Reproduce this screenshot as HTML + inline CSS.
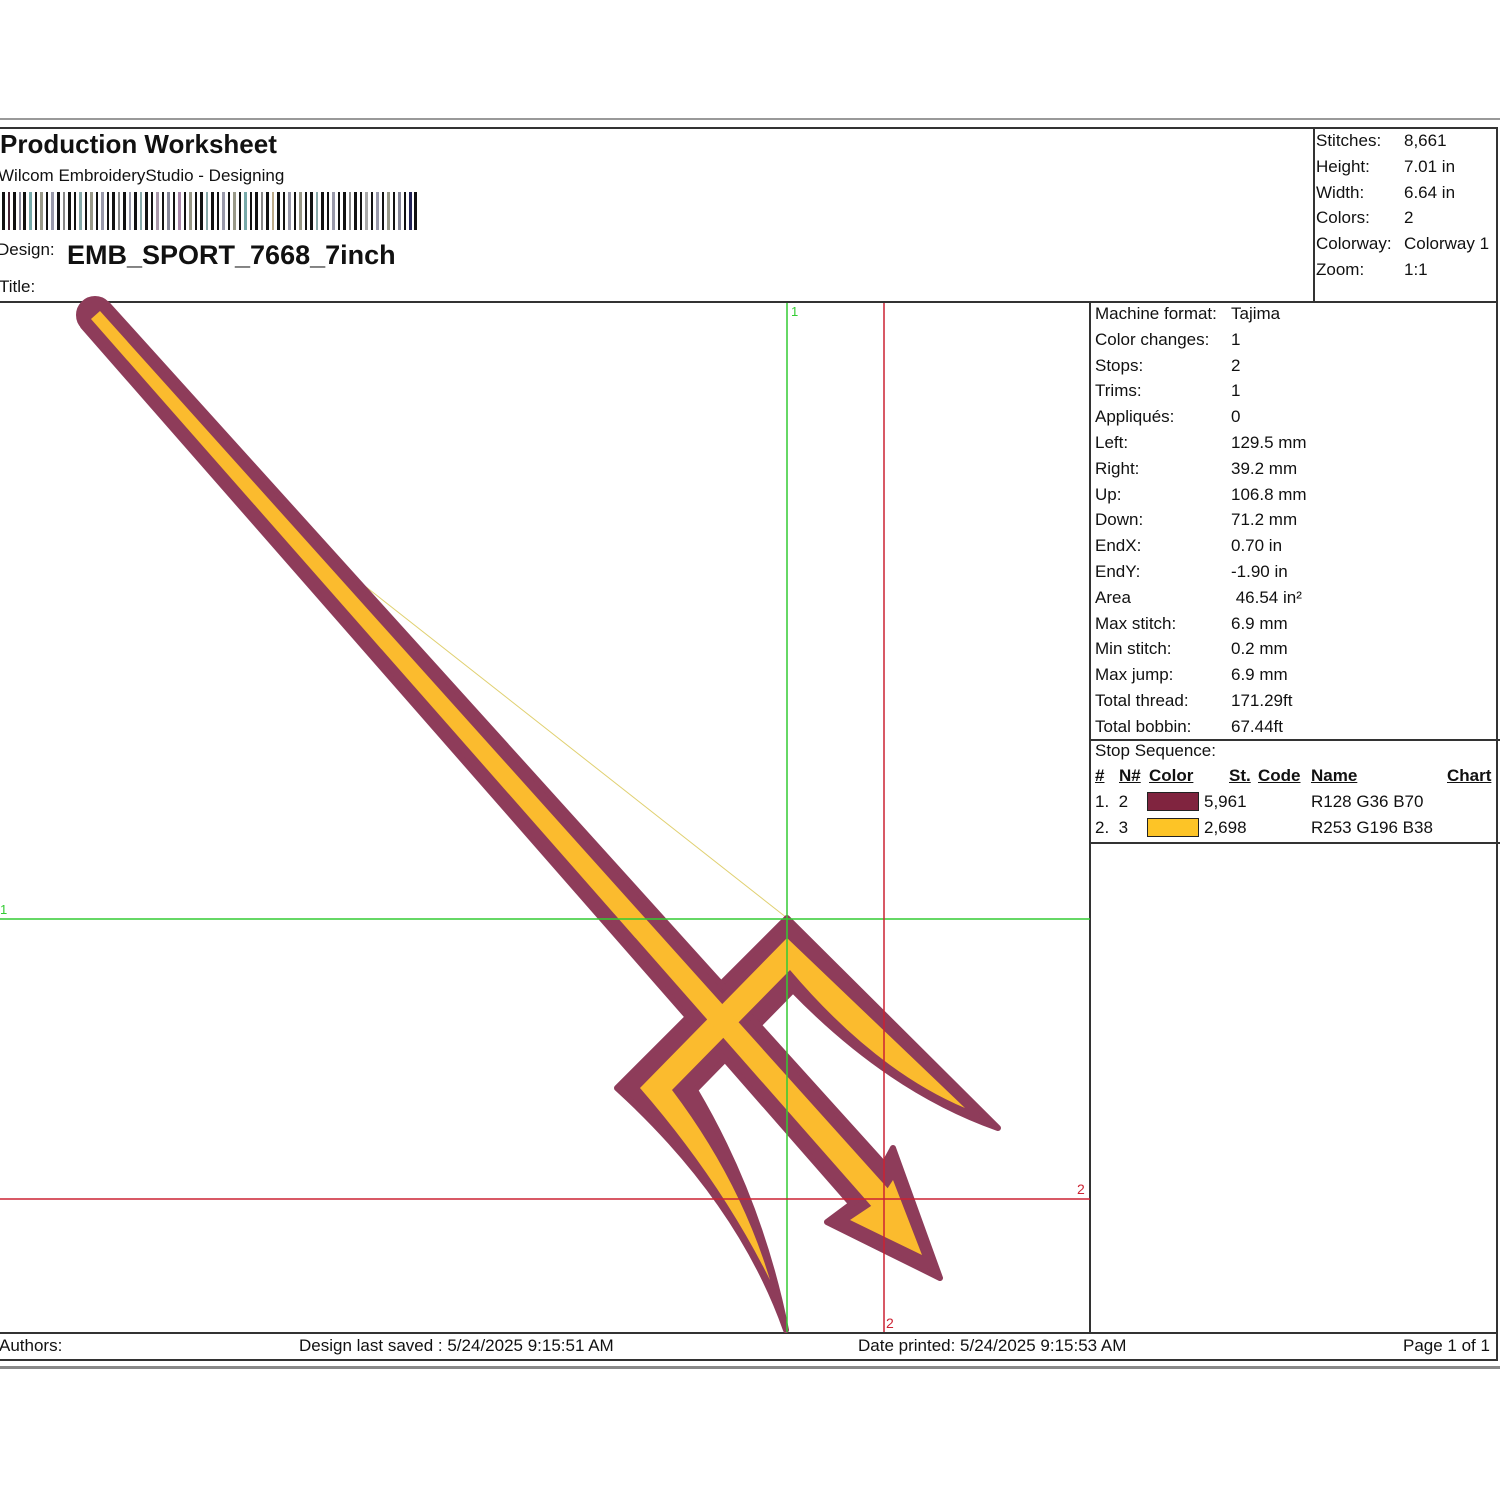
<!DOCTYPE html>
<html><head><meta charset="utf-8"><style>
html,body{margin:0;padding:0;background:#fff;}
body{width:1500px;height:1495px;position:relative;overflow:hidden;font-family:"Liberation Sans",sans-serif;color:#111;}
.a{position:absolute;white-space:nowrap;}
.t{font-size:17px;line-height:20px;}
.l{position:absolute;background:#333;}
u{text-decoration:underline;}
</style></head><body>
<div class="l" style="left:0;top:118px;width:1500px;height:2px;background:#999"></div>
<div class="l" style="left:0;top:127px;width:1498px;height:2px;"></div>
<div class="l" style="left:1496px;top:127px;width:2px;height:1234px;"></div>
<div class="l" style="left:0;top:301px;width:1498px;height:2px;"></div>
<div class="l" style="left:1313px;top:127px;width:2px;height:175px;"></div>
<div class="l" style="left:1089px;top:302px;width:2px;height:1031px;"></div>
<div class="l" style="left:1090px;top:739px;width:1407px;height:2px;"></div>
<div class="l" style="left:1090px;top:842px;width:1407px;height:2px;"></div>
<div class="l" style="left:0;top:1332px;width:1498px;height:2px;"></div>
<div class="l" style="left:0;top:1359px;width:1498px;height:2px;"></div>
<div class="l" style="left:0;top:1366px;width:1500px;height:3px;background:#888"></div>

<div class="a" style="left:0;top:129px;font-size:26px;font-weight:bold;">Production Worksheet</div>
<div class="a t" style="left:-2px;top:166px;">Wilcom EmbroideryStudio - Designing</div>
<svg class="a" style="left:2px;top:192px" width="416" height="38">
<g fill="#111">
<rect x="0" y="0" width="3" height="38"/><rect x="6" y="0" width="2" height="38" fill="#423"/><rect x="11" y="0" width="3" height="38"/><rect x="17" y="0" width="2" height="38" fill="#889"/><rect x="21" y="0" width="3" height="38"/><rect x="27" y="0" width="3" height="38" fill="#7aa"/><rect x="33" y="0" width="2" height="38"/><rect x="38" y="0" width="3" height="38" fill="#998"/><rect x="44" y="0" width="2" height="38"/><rect x="49" y="0" width="3" height="38" fill="#99a"/><rect x="55" y="0" width="3" height="38"/><rect x="61" y="0" width="2" height="38" fill="#888"/><rect x="66" y="0" width="3" height="38"/><rect x="72" y="0" width="2" height="38"/><rect x="77" y="0" width="3" height="38" fill="#8aa"/><rect x="83" y="0" width="2" height="38"/><rect x="88" y="0" width="3" height="38" fill="#998"/><rect x="94" y="0" width="2" height="38"/><rect x="99" y="0" width="3" height="38" fill="#99a"/><rect x="105" y="0" width="2" height="38"/><rect x="110" y="0" width="3" height="38"/><rect x="116" y="0" width="2" height="38" fill="#888"/><rect x="121" y="0" width="3" height="38"/><rect x="127" y="0" width="2" height="38" fill="#99a"/><rect x="132" y="0" width="3" height="38"/><rect x="138" y="0" width="2" height="38" fill="#8aa"/><rect x="143" y="0" width="3" height="38"/><rect x="149" y="0" width="2" height="38"/><rect x="154" y="0" width="3" height="38" fill="#a9a"/><rect x="160" y="0" width="2" height="38"/><rect x="165" y="0" width="3" height="38" fill="#889"/><rect x="171" y="0" width="2" height="38"/><rect x="176" y="0" width="3" height="38" fill="#a8a"/><rect x="182" y="0" width="2" height="38"/><rect x="187" y="0" width="3" height="38" fill="#998"/><rect x="193" y="0" width="2" height="38"/><rect x="198" y="0" width="3" height="38"/><rect x="204" y="0" width="2" height="38" fill="#8aa"/><rect x="209" y="0" width="3" height="38"/><rect x="215" y="0" width="2" height="38"/><rect x="220" y="0" width="3" height="38" fill="#99a"/><rect x="226" y="0" width="2" height="38"/><rect x="231" y="0" width="3" height="38" fill="#998"/><rect x="237" y="0" width="2" height="38"/><rect x="242" y="0" width="3" height="38" fill="#7aa"/><rect x="248" y="0" width="2" height="38"/><rect x="253" y="0" width="3" height="38"/><rect x="259" y="0" width="2" height="38" fill="#888"/><rect x="264" y="0" width="3" height="38"/><rect x="270" y="0" width="2" height="38" fill="#ba8"/><rect x="275" y="0" width="3" height="38"/><rect x="281" y="0" width="2" height="38"/><rect x="286" y="0" width="3" height="38" fill="#99a"/><rect x="292" y="0" width="2" height="38"/><rect x="297" y="0" width="3" height="38" fill="#998"/><rect x="303" y="0" width="2" height="38"/><rect x="308" y="0" width="3" height="38"/><rect x="314" y="0" width="2" height="38" fill="#8aa"/><rect x="319" y="0" width="3" height="38"/><rect x="325" y="0" width="2" height="38"/><rect x="330" y="0" width="3" height="38" fill="#99a"/><rect x="336" y="0" width="2" height="38"/><rect x="341" y="0" width="3" height="38"/><rect x="347" y="0" width="2" height="38" fill="#888"/><rect x="352" y="0" width="3" height="38"/><rect x="358" y="0" width="2" height="38"/><rect x="363" y="0" width="3" height="38" fill="#aaa"/><rect x="369" y="0" width="2" height="38"/><rect x="374" y="0" width="3" height="38" fill="#99a"/><rect x="380" y="0" width="2" height="38"/><rect x="385" y="0" width="3" height="38" fill="#998"/><rect x="391" y="0" width="2" height="38"/><rect x="396" y="0" width="3" height="38" fill="#889"/><rect x="402" y="0" width="2" height="38"/><rect x="407" y="0" width="3" height="38" fill="#225"/><rect x="412" y="0" width="3" height="38"/>
</g></svg>
<div class="a t" style="left:-3px;top:240px;">Design:</div>
<div class="a" style="left:67px;top:240px;font-size:27px;font-weight:bold;">EMB_SPORT_7668_7inch</div>
<div class="a t" style="left:-1px;top:277px;">Title:</div>

<div class="a t" style="left:1316px;top:128px;line-height:25.8px;">Stitches:<br>Height:<br>Width:<br>Colors:<br>Colorway:<br>Zoom:</div>
<div class="a t" style="left:1404px;top:128px;line-height:25.8px;">8,661<br>7.01 in<br>6.64 in<br>2<br>Colorway 1<br>1:1</div>

<div class="a t" style="left:1095px;top:301px;line-height:25.8px;">Machine format:<br>Color changes:<br>Stops:<br>Trims:<br>Appliqués:<br>Left:<br>Right:<br>Up:<br>Down:<br>EndX:<br>EndY:<br>Area<br>Max stitch:<br>Min stitch:<br>Max jump:<br>Total thread:<br>Total bobbin:</div>
<div class="a t" style="left:1231px;top:301px;line-height:25.8px;">Tajima<br>1<br>2<br>1<br>0<br>129.5 mm<br>39.2 mm<br>106.8 mm<br>71.2 mm<br>0.70 in<br>-1.90 in<br>&nbsp;46.54 in²<br>6.9 mm<br>0.2 mm<br>6.9 mm<br>171.29ft<br>67.44ft</div>

<div class="a t" style="left:1095px;top:741px;">Stop Sequence:</div>
<div class="a t" style="left:1095px;top:766px;font-weight:bold;"><u>#</u></div>
<div class="a t" style="left:1119px;top:766px;font-weight:bold;"><u>N#</u></div>
<div class="a t" style="left:1149px;top:766px;font-weight:bold;"><u>Color</u></div>
<div class="a t" style="left:1229px;top:766px;font-weight:bold;"><u>St.</u></div>
<div class="a t" style="left:1258px;top:766px;font-weight:bold;"><u>Code</u></div>
<div class="a t" style="left:1311px;top:766px;font-weight:bold;"><u>Name</u></div>
<div class="a t" style="left:1447px;top:766px;font-weight:bold;"><u>Chart</u></div>
<div class="a t" style="left:1095px;top:792px;">1.&nbsp; 2</div>
<div class="a" style="left:1147px;top:792px;width:50px;height:17px;background:#80243f;border:1px solid #222;"></div>
<div class="a t" style="left:1204px;top:792px;">5,961</div>
<div class="a t" style="left:1311px;top:792px;">R128 G36 B70</div>
<div class="a t" style="left:1095px;top:818px;">2.&nbsp; 3</div>
<div class="a" style="left:1147px;top:818px;width:50px;height:17px;background:#fdc426;border:1px solid #222;"></div>
<div class="a t" style="left:1204px;top:818px;">2,698</div>
<div class="a t" style="left:1311px;top:818px;">R253 G196 B38</div>

<div class="a t" style="left:-1px;top:1336px;">Authors:</div>
<div class="a t" style="left:299px;top:1336px;">Design last saved : 5/24/2025 9:15:51 AM</div>
<div class="a t" style="left:858px;top:1336px;">Date printed: 5/24/2025 9:15:53 AM</div>
<div class="a t" style="left:1403px;top:1336px;">Page 1 of 1</div>

<svg class="a" style="left:0;top:0" width="1500" height="1495">
<line x1="230" y1="480" x2="787" y2="918" stroke="#e0d070" stroke-width="1"/>
<g fill="#8e3c5a" stroke="#8e3c5a" stroke-width="6" stroke-linejoin="round">
<path d="M787,918 L998,1128 Q890,1090 793,990 L695,1090 Q760,1200 786,1330 Q740,1200 617,1088 Z"/>
<polygon points="107,304 901,1183 863,1217 83,326"/>
<circle cx="95" cy="315" r="16"/>
<polygon points="893,1148 940,1278 827,1222 870,1190"/>
</g>
<g fill="#fbbb2e">
<path d="M787,938 L965,1108 Q875,1070 790,970 L672,1090 Q740,1180 770,1280 Q720,1180 640,1088 Z"/>
<polygon points="100,311 891,1192 873,1208 91,319"/>
<polygon points="893,1180 922,1255 850,1220 880,1200"/>
</g>
<line x1="787" y1="303" x2="787" y2="1332" stroke="#33cc33" stroke-width="1.5"/>
<line x1="0" y1="919" x2="1090" y2="919" stroke="#33cc33" stroke-width="1.5"/>
<line x1="884" y1="303" x2="884" y2="1332" stroke="#cc2233" stroke-width="1.5"/>
<line x1="0" y1="1199" x2="1090" y2="1199" stroke="#cc2233" stroke-width="1.5"/>
<text x="791" y="316" font-size="13" fill="#33cc33" font-family="Liberation Sans">1</text>
<text x="0" y="914" font-size="13" fill="#33cc33" font-family="Liberation Sans">1</text>
<text x="1077" y="1194" font-size="14" fill="#cc2233" font-family="Liberation Sans">2</text>
<text x="886" y="1328" font-size="14" fill="#cc2233" font-family="Liberation Sans">2</text>
</svg>
</body></html>
